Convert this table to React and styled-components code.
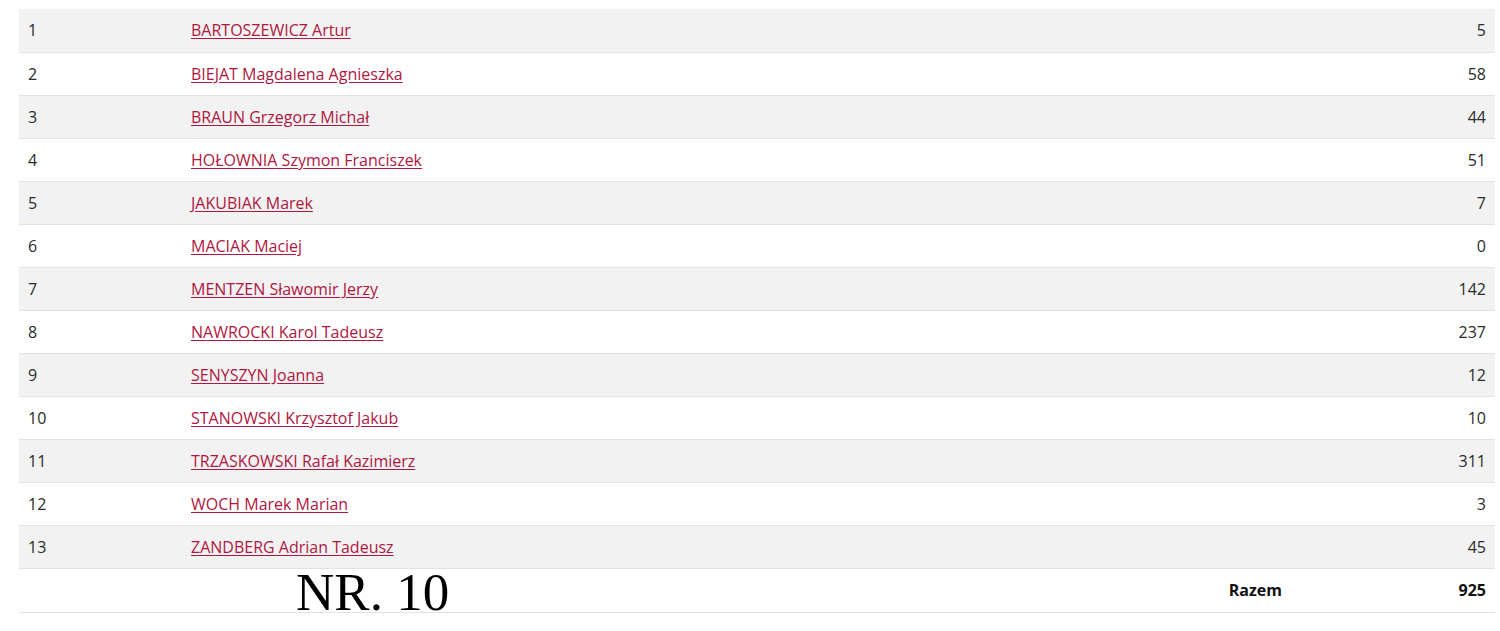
import React from "react";
import styled, { createGlobalStyle } from "styled-components";

const GlobalStyle = createGlobalStyle`
  body {
    margin: 0;
    background: #fff;
    font-family: "Open Sans", "Liberation Sans", sans-serif;
  }
`;

const Page = styled.div`
  padding: 9px 5px 0 19px;
`;

const Table = styled.table`
  width: 1476px;
  border-collapse: collapse;
  font-size: 16px;
  color: #2b2b2b;
`;

const Row = styled.tr`
  background: ${(p) => (p.$striped ? "#f2f2f2" : "#fff")};
  border-bottom: 1px solid #e2e2e2;
`;

const Cell = styled.td`
  height: 43px;
  padding: 0 9px;
  text-align: ${(p) => p.$align || "left"};
  font-weight: ${(p) => (p.$bold ? 700 : 400)};
  color: ${(p) => (p.$bold ? "#111" : "#2b2b2b")};
  vertical-align: middle;
  width: ${(p) => p.$width || "auto"};
  box-sizing: border-box;
`;

const NameLink = styled.a`
  color: #b0173f;
  text-decoration: underline;
  text-underline-offset: 2px;
`;

const FootName = styled.div`
  display: flex;
  align-items: center;
  justify-content: space-between;
  height: 43px;
  overflow: visible;
`;

const Stamp = styled.span`
  font-family: "Liberation Serif", "Times New Roman", serif;
  font-size: 53px;
  line-height: 43px;
  color: #000;
  margin-left: 105px;
  transform: translateY(2px);
`;

const Total = styled.span`
  font-weight: 700;
  color: #111;
`;

const candidates = [
  ["BARTOSZEWICZ Artur", 5],
  ["BIEJAT Magdalena Agnieszka", 58],
  ["BRAUN Grzegorz Michał", 44],
  ["HOŁOWNIA Szymon Franciszek", 51],
  ["JAKUBIAK Marek", 7],
  ["MACIAK Maciej", 0],
  ["MENTZEN Sławomir Jerzy", 142],
  ["NAWROCKI Karol Tadeusz", 237],
  ["SENYSZYN Joanna", 12],
  ["STANOWSKI Krzysztof Jakub", 10],
  ["TRZASKOWSKI Rafał Kazimierz", 311],
  ["WOCH Marek Marian", 3],
  ["ZANDBERG Adrian Tadeusz", 45],
];

export default function App() {
  const total = candidates.reduce((s, c) => s + c[1], 0);
  return (
    <Page>
      <GlobalStyle />
      <Table>
        <tbody>
          {candidates.map(([name, votes], i) => (
            <Row key={name} $striped={i % 2 === 0}>
              <Cell $width="163px">{i + 1}</Cell>
              <Cell>
                <NameLink href="#">{name}</NameLink>
              </Cell>
              <Cell $align="right" $width="204px">
                {votes}
              </Cell>
            </Row>
          ))}
        </tbody>
        <tfoot>
          <Row>
            <Cell />
            <Cell>
              <FootName>
                <Stamp>NR. 10</Stamp>
                <Total>Razem</Total>
              </FootName>
            </Cell>
            <Cell $align="right" $bold>
              {total}
            </Cell>
          </Row>
        </tfoot>
      </Table>
    </Page>
  );
}
